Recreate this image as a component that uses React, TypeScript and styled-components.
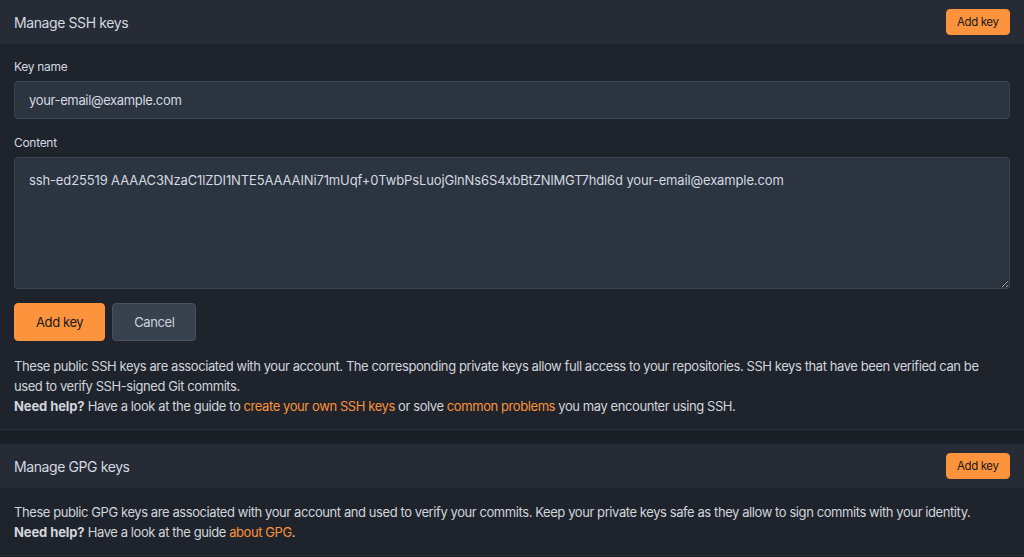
import styled, { createGlobalStyle } from 'styled-components';

const GlobalStyle = createGlobalStyle`
  html, body {
    margin: 0;
    padding: 0;
    background: #1b1f26;
  }
  body {
    font-family: Inter, 'Noto Sans', sans-serif;
    font-size: 13px;
    color: #d1d6dd;
  }
  * {
    box-sizing: border-box;
  }
`;

const Page = styled.div`
  display: flex;
  flex-direction: column;
  gap: 14px;
  min-height: 557px;
`;

const Segment = styled.section`
  background: #1f232b;
  border-bottom: 1px solid #2b313b;
`;

const SegmentHeader = styled.header`
  display: flex;
  align-items: center;
  justify-content: space-between;
  height: 44px;
  padding: 0 14px;
  background: #262b35;
`;

const HeaderTitle = styled.h4`
  margin: 0;
  font-size: 14px;
  font-weight: 400;
  letter-spacing: -0.4px;
  color: #d4d9e0;
`;

const SegmentBody = styled.div`
  padding: 14px 14px 13px;
`;

const Form = styled.form`
  display: flex;
  flex-direction: column;
`;

const Field = styled.div`
  display: flex;
  flex-direction: column;
  gap: 5px;
  margin-bottom: 15px;
`;

const Label = styled.label`
  font-size: 12px;
  line-height: 18px;
  letter-spacing: -0.3px;
  color: #d4d9e0;
`;

const TextInput = styled.input`
  height: 38px;
  padding: 0 14px;
  background: #2c3440;
  border: 1px solid #3d4553;
  border-radius: 4px;
  color: #d4d9e0;
  font: inherit;
  font-size: 13px;
  letter-spacing: -0.35px;
  outline: none;
`;

const TextArea = styled.textarea`
  height: 132px;
  padding: 12px 14px;
  background: #2c3440;
  border: 1px solid #3d4553;
  border-radius: 4px;
  color: #d4d9e0;
  font: inherit;
  font-size: 13px;
  line-height: 20px;
  letter-spacing: -0.13px;
  outline: none;
  resize: vertical;
  color-scheme: dark;
`;

const Actions = styled.div`
  display: flex;
  gap: 7px;
  margin-top: -1px;
  margin-bottom: 15px;
`;

const Button = styled.button<{ $variant?: 'primary' | 'secondary'; $small?: boolean }>`
  display: inline-flex;
  align-items: center;
  justify-content: center;
  height: ${(p) => (p.$small ? '26px' : '38px')};
  padding: ${(p) => (p.$small ? '0 10.5px' : '0 21px')};
  font-family: inherit;
  font-size: ${(p) => (p.$small ? '11.5px' : '13px')};
  letter-spacing: ${(p) => (p.$small ? '-0.4px' : '-0.4px')};
  border-radius: 4px;
  cursor: pointer;
  background: ${(p) => (p.$variant === 'secondary' ? '#38414e' : '#fd943d')};
  color: ${(p) => (p.$variant === 'secondary' ? '#cdd3dc' : '#16181c')};
  border: 1px solid ${(p) => (p.$variant === 'secondary' ? '#4a525f' : '#fd943d')};
`;

const Help = styled.p`
  margin: 0;
  line-height: 20px;
  letter-spacing: -0.42px;
  color: #d1d6dd;

  strong {
    letter-spacing: -0.1px;
  }
`;

const Link = styled.a`
  color: #fb923c;
  text-decoration: none;
`;

const SSH_KEY =
  'ssh-ed25519 AAAAC3NzaC1lZDI1NTE5AAAAINi71mUqf+0TwbPsLuojGlnNs6S4xbBtZNlMGT7hdl6d your-email@example.com';

const App = () => {
  return (
    <>
      <GlobalStyle />
      <Page>
        <Segment>
          <SegmentHeader>
            <HeaderTitle>Manage SSH keys</HeaderTitle>
            <Button $small type='button'>
              Add key
            </Button>
          </SegmentHeader>
          <SegmentBody>
            <Form onSubmit={(e) => e.preventDefault()}>
              <Field>
                <Label htmlFor='ssh-key-name'>Key name</Label>
                <TextInput id='ssh-key-name' defaultValue='your-email@example.com' />
              </Field>
              <Field>
                <Label htmlFor='ssh-key-content'>Content</Label>
                <TextArea id='ssh-key-content' defaultValue={SSH_KEY} />
              </Field>
              <Actions>
                <Button type='submit'>Add key</Button>
                <Button $variant='secondary' type='button'>
                  Cancel
                </Button>
              </Actions>
            </Form>
            <Help>
              These public SSH keys are associated with your account. The corresponding private keys allow
              full access to your repositories. SSH keys that have been verified can be used to verify
              SSH-signed Git commits.
              <br />
              <strong>Need help?</strong> Have a look at the guide to{' '}
              <Link href='#'>create your own SSH keys</Link> or solve <Link href='#'>common problems</Link>{' '}
              you may encounter using SSH.
            </Help>
          </SegmentBody>
        </Segment>
        <Segment>
          <SegmentHeader>
            <HeaderTitle>Manage GPG keys</HeaderTitle>
            <Button $small type='button'>
              Add key
            </Button>
          </SegmentHeader>
          <SegmentBody>
            <Help>
              These public GPG keys are associated with your account and used to verify your commits. Keep
              your private keys safe as they allow to sign commits with your identity.
              <br />
              <strong>Need help?</strong> Have a look at the guide <Link href='#'>about GPG</Link>.
            </Help>
          </SegmentBody>
        </Segment>
      </Page>
    </>
  );
};

export default App;
